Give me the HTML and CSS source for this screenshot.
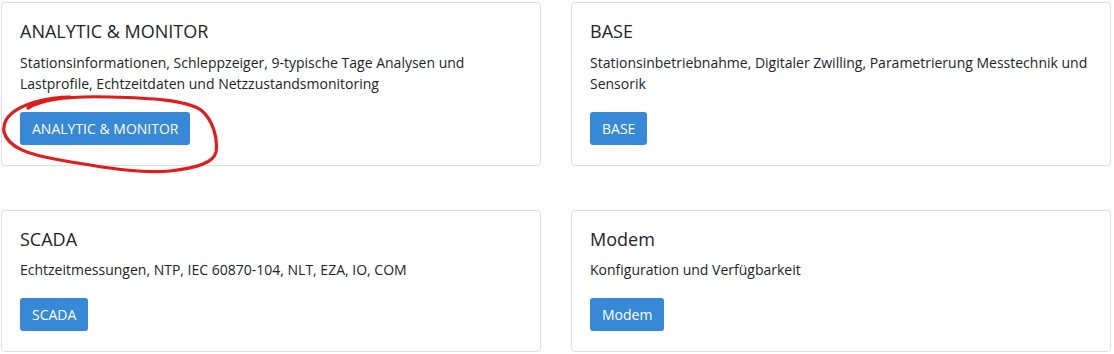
FILE: index.html
```html
<!DOCTYPE html>
<html lang="de">

<head>
    <meta charset="UTF-8" />
    <meta name="viewport" content="width=device-width, initial-scale=1.0" />
    <title>Module</title>
    <link rel="stylesheet" href="styles.css">
</head>

<body>
    <div class="modules">
        <div class="card">
            <h5 class="card-title">ANALYTIC &amp; MONITOR</h5>
            <p class="card-text">Stationsinformationen, Schleppzeiger, 9-typische Tage Analysen und Lastprofile, Echtzeitdaten und Netzzustandsmonitoring</p>
            <a href="#" class="btn">ANALYTIC &amp; MONITOR</a>
            <!-- red marker drawn over the screenshot -->
            <svg class="marker" width="240" height="190" viewBox="0 0 240 190">
                <path d="M 28 108 C 45 98, 80 96, 110 97 C 150 98, 186 100, 201 110 C 213 120, 218 138, 216 152 C 214 163, 196 168, 170 171 C 140 174, 100 167, 60 160 C 30 155, 8 148, 4 132 C 2 118, 15 108, 35 102 C 50 98, 60 97, 70 97"
                    fill="none" stroke="#e31b1b" stroke-width="3.2" stroke-linecap="round" />
            </svg>
        </div>
        <div class="card">
            <h5 class="card-title">BASE</h5>
            <p class="card-text">Stationsinbetriebnahme, Digitaler Zwilling, Parametrierung Messtechnik und Sensorik</p>
            <a href="#" class="btn">BASE</a>
        </div>
        <div class="card">
            <h5 class="card-title">SCADA</h5>
            <p class="card-text">Echtzeitmessungen, NTP, IEC 60870-104, NLT, EZA, IO, COM</p>
            <a href="#" class="btn">SCADA</a>
        </div>
        <div class="card">
            <h5 class="card-title">Modem</h5>
            <p class="card-text">Konfiguration und Verfügbarkeit</p>
            <a href="#" class="btn">Modem</a>
        </div>
    </div>
</body>

</html>
```

FILE: styles.css
```css
body {
    margin: 0;
    font-family: 'Open Sans', sans-serif;
    font-size: 14px;
    line-height: 1.5;
    color: #212529;
    background-color: #fff;
}

.modules {
    display: grid;
    grid-template-columns: 540px 540px;
    column-gap: 30px;
    row-gap: 44px;
    align-items: start;
    padding: 2px 0 0 1px;
}

.card {
    position: relative;
    border: 1px solid #dfdfdf;
    border-radius: 4px;
    padding: 18px 18px 20px;
}

.card-title {
    margin: 0 0 9px;
    font-size: 18px;
    font-weight: 400;
    line-height: 1.2;
}

.card-text {
    margin: 0 0 18px;
}

.btn {
    display: inline-block;
    padding: 6px 12px;
    font-size: 14px;
    line-height: 21px;
    color: white;
    background-color: #3788d6;
    border-radius: 3px;
    text-decoration: none;
}

/* annotation over the first card */
.marker {
    position: absolute;
    left: -2px;
    top: -3px;
    overflow: visible;
    pointer-events: none;
}
```
